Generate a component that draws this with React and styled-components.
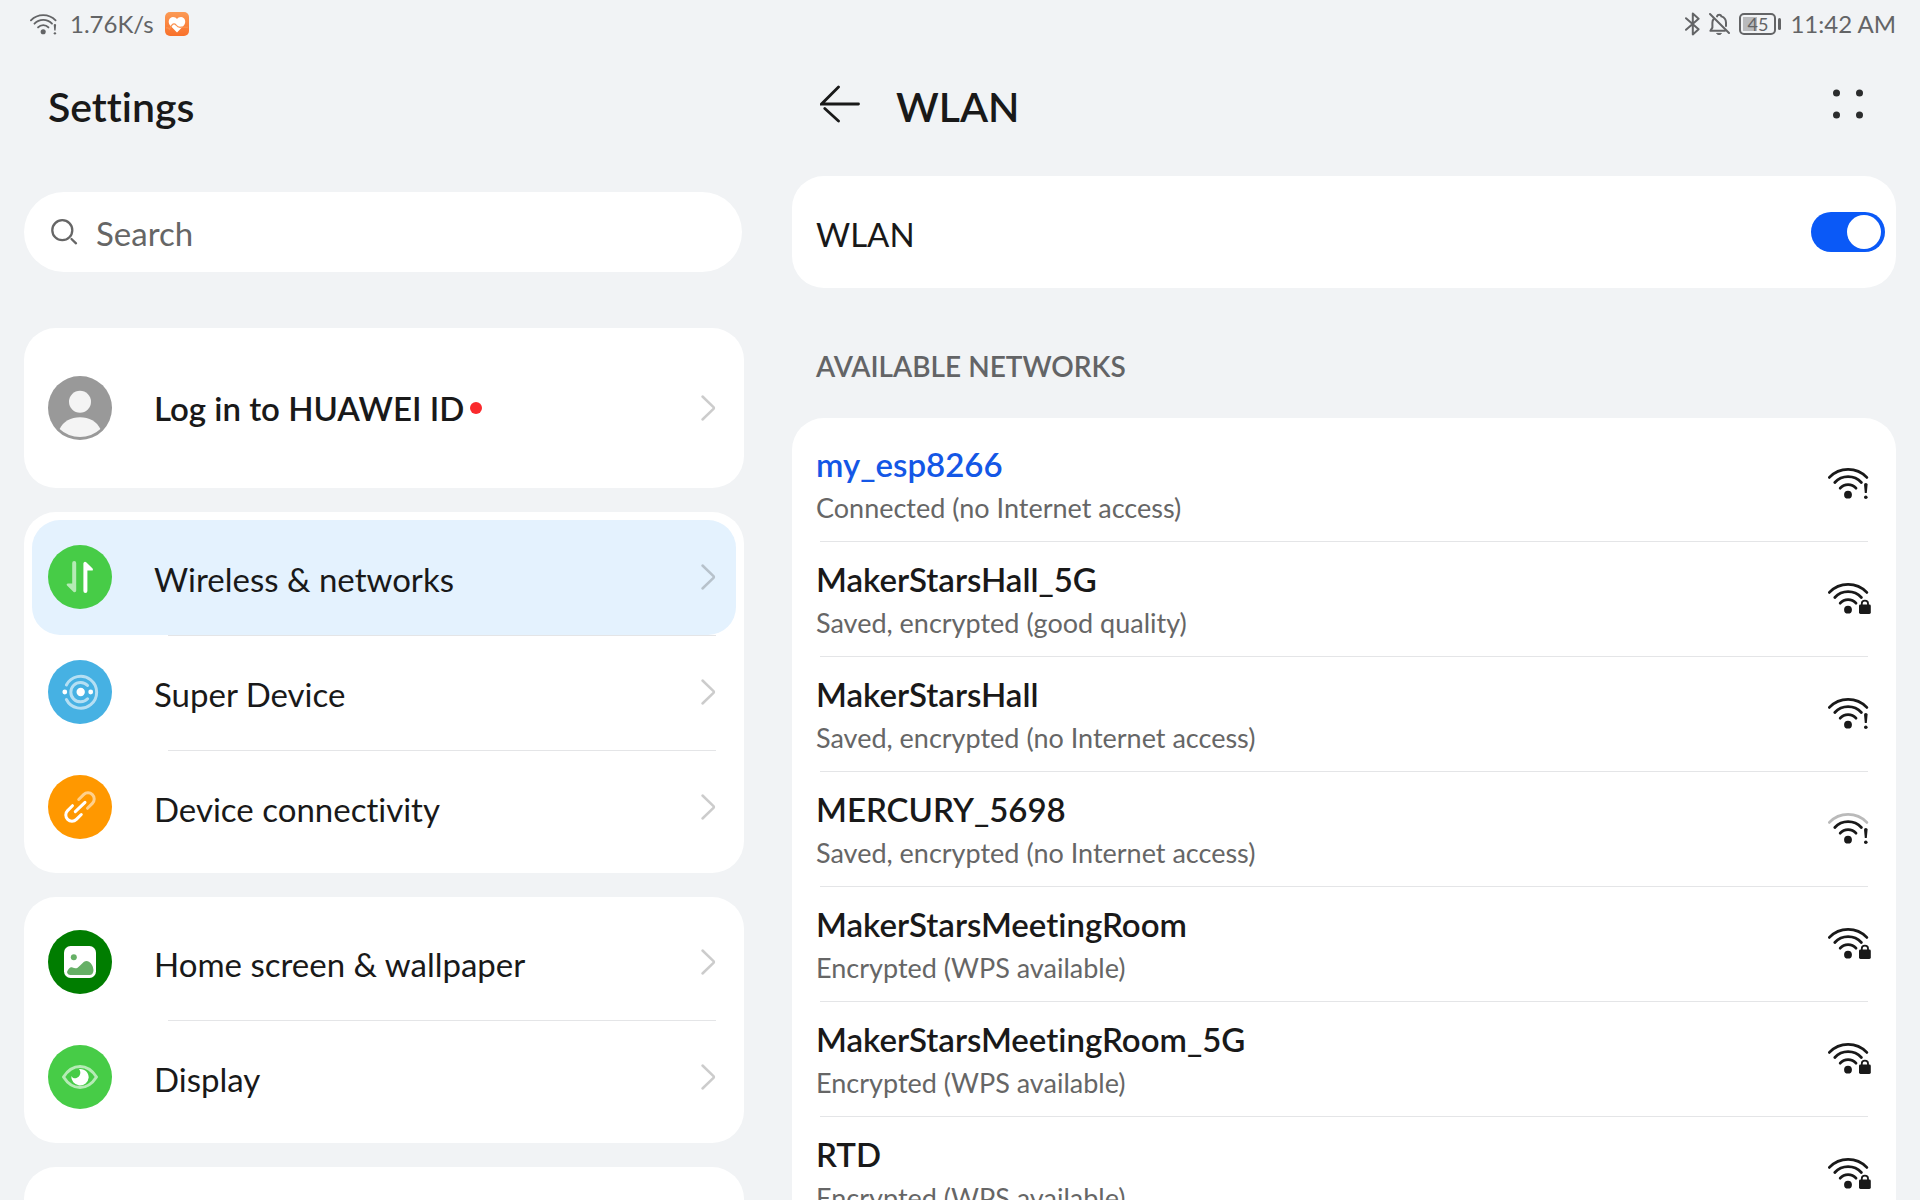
import React from "react";
import styled, { createGlobalStyle, css } from "styled-components";

const GlobalStyle = createGlobalStyle`
  *, *::before, *::after { box-sizing: border-box; }
  body {
    margin: 0;
    background: #f1f3f5;
    color: #191919;
    font-family: Lato, "Open Sans", sans-serif;
    font-variant-ligatures: none;
  }
  button, input { font: inherit; font-variant-ligatures: none; color: inherit; }
  h1, h2, h3, p, ul { margin: 0; padding: 0; }
  ul { list-style: none; }
  svg { display: block; flex: none; }
`;

const Screen = styled.div`
  height: 100vh;
  overflow: hidden;
`;

const StatusBar = styled.header`
  display: flex;
  justify-content: space-between;
  height: 48px;
  padding: 0 24px 0 30px;
  color: #636466;
  font-size: 24px;
  line-height: 48px;
`;

const StatusGroup = styled.div`
  display: flex;
  align-items: center;
  gap: ${(p) => p.$gap}px;
`;

const Battery = styled.span`
  display: flex;
  align-items: center;
  gap: 2px;
  &::after {
    content: "";
    width: 3px;
    height: 12px;
    border-radius: 2px;
    background: #636466;
  }
`;

const BatteryBody = styled.span`
  width: 37px;
  height: 22px;
  border: 2px solid #636466;
  border-radius: 5px;
  padding: 2px;
  background: linear-gradient(#b9babc, #b9babc) 2px 2px / 14px 14px no-repeat;
  font-size: 18px;
  line-height: 14px;
  text-align: center;
`;

const Columns = styled.div`
  display: grid;
  grid-template-columns: minmax(0, 15fr) minmax(0, 23fr);
  gap: 48px;
  padding: 0 24px;
`;

const Pane = styled.div`
  display: flex;
  flex-direction: column;
`;

const PaneHeader = styled.div`
  display: flex;
  align-items: center;
  height: 112px;
  padding: 0 24px;
  margin-bottom: ${(p) => p.$space}px;
`;

const Title = styled.h1`
  flex: 1;
  padding-top: 6px;
  font-size: 41px;
  font-weight: 600;
  line-height: 48px;
`;

const IconButton = styled.button`
  display: flex;
  align-items: center;
  justify-content: center;
  width: 48px;
  height: 48px;
  padding: 0;
  border: 0;
  background: none;
  cursor: pointer;
`;

const BackButton = styled(IconButton)`
  margin-right: 32px;
`;

const SearchBox = styled.label`
  display: flex;
  align-items: center;
  gap: 18px;
  height: 80px;
  margin: 0 2px 56px 0;
  padding: 0 26px;
  border-radius: 40px;
  background: #fff;
  color: #666;
`;

const SearchInput = styled.input`
  flex: 1;
  min-width: 0;
  padding: 2px 0 0;
  border: 0;
  outline: 0;
  background: none;
  font-size: 33px;
  line-height: 40px;
  &::placeholder { color: #666; opacity: 1; }
`;

const Cards = styled.nav`
  display: flex;
  flex-direction: column;
  gap: 24px;
`;

const Card = styled.section`
  border-radius: 32px;
  background: #fff;
  padding: 8px;
  min-height: 112px;
`;

const Item = styled.li`
  display: flex;
  flex-direction: column;
  min-height: ${(p) => (p.$tall ? 144 : 115)}px;
  & + &::before {
    content: "";
    height: 1px;
    margin: 0 20px -1px ${(p) => p.$inset}px;
    background: #e4e5e7;
  }
`;

const rowBase = css`
  display: flex;
  flex: 1;
  align-items: center;
  width: 100%;
  border: 0;
  background: none;
  text-align: left;
  cursor: pointer;
`;

const MenuRow = styled.button`
  ${rowBase}
  gap: 42px;
  padding: 0 20px ${(p) => (p.$tall ? 0 : 1)}px 16px;
  border-radius: 28px;
  background: ${(p) => (p.$active ? "#e4f2fe" : "transparent")};
`;

const NetworkRow = styled.button`
  ${rowBase}
  justify-content: space-between;
  padding: 0 16px 1px;
`;

const Label = styled.span`
  flex: 1;
  display: flex;
  align-items: center;
  gap: 6px;
  padding-top: ${(p) => (p.$strong ? 0 : 4)}px;
  font-size: 33px;
  font-weight: ${(p) => (p.$strong ? 600 : 400)};
  line-height: 40px;
`;

const Dot = styled.span`
  width: 12px;
  height: 12px;
  border-radius: 50%;
  background: #fa2a2d;
`;

const NetworkText = styled.span`
  display: flex;
  flex-direction: column;
  gap: 6px;
  padding-top: 4px;
`;

const NetworkName = styled.span`
  font-size: 33px;
  font-weight: 600;
  line-height: 40px;
  color: ${(p) => (p.$connected ? "#1457e6" : "inherit")};
`;

const NetworkState = styled.span`
  font-size: 27px;
  line-height: 36px;
  color: #666;
`;

const SwitchCard = styled.label`
  display: flex;
  align-items: center;
  height: 112px;
  padding: 0 11px 0 24px;
  border-radius: 32px;
  background: #fff;
`;

const Switch = styled.input`
  appearance: none;
  display: flex;
  justify-content: flex-end;
  width: 74px;
  height: 40px;
  margin: 0;
  padding: 3px 4px;
  border-radius: 20px;
  background: #0a59f7;
  cursor: pointer;
  &::before {
    content: "";
    width: 34px;
    height: 34px;
    border-radius: 50%;
    background: #fff;
  }
  &:not(:checked) {
    justify-content: flex-start;
    background: #c4c6c9;
  }
`;

const SectionTitle = styled.h2`
  padding: 60px 24px 34px;
  font-size: 28px;
  font-weight: 600;
  line-height: 36px;
  color: #636466;
`;

function Wifi({ badge, weak, width = 44, height = 32 }) {
  return (
    <svg width={width} height={height} viewBox="0 0 44 32" fill="none" stroke="currentColor" strokeWidth="2.8" strokeLinecap="round">
      <path d="M1.4 10.4A26 26 0 0 1 38.8 10.4" opacity={weak ? 0.3 : 1} />
      <path d="M6.8 15.5A18 18 0 0 1 33.4 15.5" />
      <path d="M12.2 21.2A10.5 10.5 0 0 1 28 21.2" />
      <circle cx="20" cy="27.7" r="3.9" fill="currentColor" stroke="none" />
      {badge === "alert" && (
        <g fill="currentColor" stroke="none">
          <path d="M36 17.6a1.8 1.6 0 0 1 3.6 0L38.8 26h-2z" />
          <circle cx="37.8" cy="30.2" r="1.8" />
        </g>
      )}
      {badge === "lock" && (
        <g>
          <rect x="31" y="22.6" width="11.8" height="9.3" rx="1.4" fill="currentColor" stroke="none" />
          <path d="M33.8 23v-1.6a3.1 2.8 0 0 1 6.2 0V23" strokeWidth="1.8" />
        </g>
      )}
    </svg>
  );
}

const HealthIcon = () => (
  <svg width="24" height="24" viewBox="0 0 24 24">
    <defs>
      <linearGradient id="health" x1="0" y1="0" x2="0" y2="1">
        <stop offset="0" stopColor="#fb9a55" />
        <stop offset="1" stopColor="#f9702a" />
      </linearGradient>
    </defs>
    <rect width="24" height="24" rx="5" fill="url(#health)" />
    <path d="M12 20.6 5 13.2C2.4 10 4 5.200 8 5 9.800 5 11.200 5.800 12 7 12.800 5.800 14.200 5 16 5 20 5.200 21.600 10 19 13.200Z" fill="#fff" />
    <path d="M1 15.8H3L4.400 17.200 6.500 13.600C8 11.600 9.600 11.400 11 13 12.600 15 14 15.600 16 15.200 18 14.800 20 15.600 23 15.200" fill="none" stroke="#fb9250" strokeWidth="1.2" />
  </svg>
);

const BluetoothIcon = () => (
  <svg width="15" height="24" viewBox="0 0 15 24" fill="none" stroke="currentColor" strokeWidth="2" strokeLinejoin="round" strokeLinecap="round">
    <path d="M1 6.200 13.600 17.200 7.800 22.400V1.600L13.600 6.800 1 17.800" />
  </svg>
);

const BellOffIcon = () => (
  <svg width="21" height="24" viewBox="0 0 21 24" fill="none" stroke="currentColor" strokeWidth="2" strokeLinecap="round" strokeLinejoin="round">
    <path d="M1 2 20 21" />
    <path d="M8 4.400A2.300 2.300 0 0 1 12.400 4.400C15.400 5.400 17 7.600 17 10.600V14" />
    <path d="M4.400 7.400C3.600 8.600 3.400 9.600 3.400 10.800V15.600L1.400 18.800H16" />
    <path d="M8 21.400H12.400L11.400 22.400H9Z" fill="currentColor" strokeWidth="1" />
  </svg>
);

const BackIcon = () => (
  <svg width="40" height="38" viewBox="0 0 40 38" fill="none" stroke="currentColor" strokeWidth="2.8" strokeLinecap="round">
    <path d="M18.500 2 1.600 19H38.500M4.800 23.500 18.500 36" />
  </svg>
);

const MoreIcon = () => (
  <svg width="30" height="30" viewBox="0 0 30 30" fill="#2b2c2d">
    {[[3.5, 4], [26.5, 4], [3.5, 26], [26.5, 26]].map(([x, y]) => (
      <circle key={`${x}-${y}`} cx={x} cy={y} r="3.500" />
    ))}
  </svg>
);

const SearchIcon = () => (
  <svg width="28" height="28" viewBox="0 0 28 28" fill="none" stroke="currentColor" strokeWidth="2.300" strokeLinecap="round">
    <circle cx="12.300" cy="12.200" r="10" />
    <path d="M21.500 21 26 25.300" />
  </svg>
);

const Chevron = () => (
  <svg width="16" height="28" viewBox="0 0 16 28" fill="none" stroke="#191919" strokeOpacity=".22" strokeWidth="2.500" strokeLinecap="round" strokeLinejoin="round">
    <path d="M2.500 2.500 13.500 13.200Q14.300 14 13.500 14.800L2.500 25.500" />
  </svg>
);

const glyphs = {
  account: (
    <>
      <circle cx="32" cy="32" r="32" fill="#999" />
      <circle cx="32" cy="25.700" r="11" fill="#f4f4f4" />
      <path d="M11.600 53C15 45.500 23 41.200 32 41.200S49 45.500 52.400 53A29.700 29.700 0 0 1 11.600 53Z" fill="#f4f4f4" />
    </>
  ),
  wireless: (
    <>
      <circle cx="32" cy="32" r="32" fill="#47cc47" />
      <path d="M24.200 18a2 2 0 0 1 4 0V45.500a1.600 1.600 0 0 1-2.800 1.200L19 40.600Q18 38.400 20 38.400H24.200Z" fill="#fff" opacity=".6" />
      <path d="M39.400 46a2 2 0 0 1-4 0V18.500a1.600 1.600 0 0 1 2.800-1.200L44.600 23.400Q45.600 25.600 43.600 25.600H39.400Z" fill="#fff" />
    </>
  ),
  superDevice: (
    <>
      <circle cx="32" cy="32" r="32" fill="#46b1e3" />
      <g fill="none" stroke="#fff" strokeWidth="3" strokeLinecap="round" opacity=".6">
        <path d="M18.400 25A16 16 0 1 1 18.400 39.500" />
        <path d="M39.600 25.500A9.700 9.700 0 1 0 39.600 38.800" />
      </g>
      <g fill="#fff">
        <circle cx="32.700" cy="32" r="4.200" />
        <circle cx="16.800" cy="32" r="2.400" />
        <circle cx="42.700" cy="32" r="2.400" />
      </g>
    </>
  ),
  link: (
    <>
      <circle cx="32" cy="32" r="32" fill="#ff9800" />
      <g fill="none" stroke="#fff" strokeWidth="3" strokeLinecap="round">
        <path d="M24.500 30.700 19.600 35.600A6.200 6.200 0 0 0 28.400 44.400L33.300 39.500M27.300 36.700 37 27.300" />
        <path d="M30.700 24.500 35.600 19.600A6.200 6.200 0 0 1 44.400 28.400L39.500 33.300" opacity=".55" />
      </g>
    </>
  ),
  wallpaper: (
    <>
      <circle cx="32" cy="32" r="32" fill="#007d00" />
      <rect x="16" y="16" width="32" height="32" rx="6.500" fill="#fff" />
      <circle cx="25.800" cy="27.300" r="3" fill="#66b066" />
      <path d="M19 42C20.500 38 22.500 36.600 24.500 37.400 27 38.600 29 38.600 31 36.400L36 31.800Q38.500 30.200 41 31.800 45 34.500 45.500 40 45.300 45 41.500 45H22.500Q19.500 45 19 42Z" fill="#66b066" />
    </>
  ),
  display: (
    <>
      <circle cx="32" cy="32" r="32" fill="#47cc47" />
      <path d="M15.500 32C20 25 25.500 21.500 32 21.500S44 25 48.500 32C44 39 38.500 42.500 32 42.500S20 39 15.500 32Z" fill="none" stroke="#fff" strokeWidth="3" strokeLinejoin="round" opacity=".6" />
      <path d="M31 24C37 23.500 40.700 27.500 40.700 32.500A8.700 8.700 0 0 1 23.300 31C24.500 33 26.500 33.800 28.500 33 32.500 31.500 33.500 27 31 24Z" fill="#fff" />
    </>
  ),
};

const Glyph = ({ name }) => (
  <svg width="64" height="64" viewBox="0 0 64 64" aria-hidden="true">{glyphs[name]}</svg>
);

const menuGroups = [
  [{ icon: "account", label: "Log in to HUAWEI ID", strong: true, dot: true, tall: true }],
  [
    { icon: "wireless", label: "Wireless & networks", active: true },
    { icon: "superDevice", label: "Super Device" },
    { icon: "link", label: "Device connectivity" },
  ],
  [
    { icon: "wallpaper", label: "Home screen & wallpaper" },
    { icon: "display", label: "Display" },
  ],
  [],
];

const networks = [
  { name: "my_esp8266", state: "Connected (no Internet access)", badge: "alert", connected: true },
  { name: "MakerStarsHall_5G", state: "Saved, encrypted (good quality)", badge: "lock" },
  { name: "MakerStarsHall", state: "Saved, encrypted (no Internet access)", badge: "alert" },
  { name: "MERCURY_5698", state: "Saved, encrypted (no Internet access)", badge: "alert", weak: true },
  { name: "MakerStarsMeetingRoom", state: "Encrypted (WPS available)", badge: "lock" },
  { name: "MakerStarsMeetingRoom_5G", state: "Encrypted (WPS available)", badge: "lock" },
  { name: "RTD", state: "Encrypted (WPS available)", badge: "lock" },
];

export default function App() {
  return (
    <Screen>
      <GlobalStyle />
      <StatusBar>
        <StatusGroup $gap={11}>
          <Wifi badge="alert" width={29} height={22} />
          <span>1.76K/s</span>
          <HealthIcon />
        </StatusGroup>
        <StatusGroup $gap={9}>
          <BluetoothIcon />
          <BellOffIcon />
          <Battery><BatteryBody>45</BatteryBody></Battery>
          <span>11:42 AM</span>
        </StatusGroup>
      </StatusBar>
      <Columns>
        <Pane>
          <PaneHeader $space={32}>
            <Title>Settings</Title>
          </PaneHeader>
          <SearchBox>
            <SearchIcon />
            <SearchInput type="search" placeholder="Search" aria-label="Search" />
          </SearchBox>
          <Cards>
            {menuGroups.map((group, i) => (
              <Card key={i}>
                <ul>
                  {group.map((item) => (
                    <Item key={item.label} $tall={item.tall} $inset={136}>
                      <MenuRow type="button" $active={item.active} $tall={item.tall}>
                        <Glyph name={item.icon} />
                        <Label $strong={item.strong}>
                          {item.label}
                          {item.dot && <Dot />}
                        </Label>
                        <Chevron />
                      </MenuRow>
                    </Item>
                  ))}
                </ul>
              </Card>
            ))}
          </Cards>
        </Pane>
        <Pane as="main">
          <PaneHeader $space={16}>
            <BackButton type="button" aria-label="Back"><BackIcon /></BackButton>
            <Title>WLAN</Title>
            <IconButton type="button" aria-label="More"><MoreIcon /></IconButton>
          </PaneHeader>
          <SwitchCard>
            <Label>WLAN</Label>
            <Switch type="checkbox" role="switch" defaultChecked />
          </SwitchCard>
          <SectionTitle>AVAILABLE NETWORKS</SectionTitle>
          <Card>
            <ul>
              {networks.map((n) => (
                <Item key={n.name} $inset={20}>
                  <NetworkRow type="button">
                    <NetworkText>
                      <NetworkName $connected={n.connected}>{n.name}</NetworkName>
                      <NetworkState>{n.state}</NetworkState>
                    </NetworkText>
                    <Wifi badge={n.badge} weak={n.weak} />
                  </NetworkRow>
                </Item>
              ))}
            </ul>
          </Card>
        </Pane>
      </Columns>
    </Screen>
  );
}
